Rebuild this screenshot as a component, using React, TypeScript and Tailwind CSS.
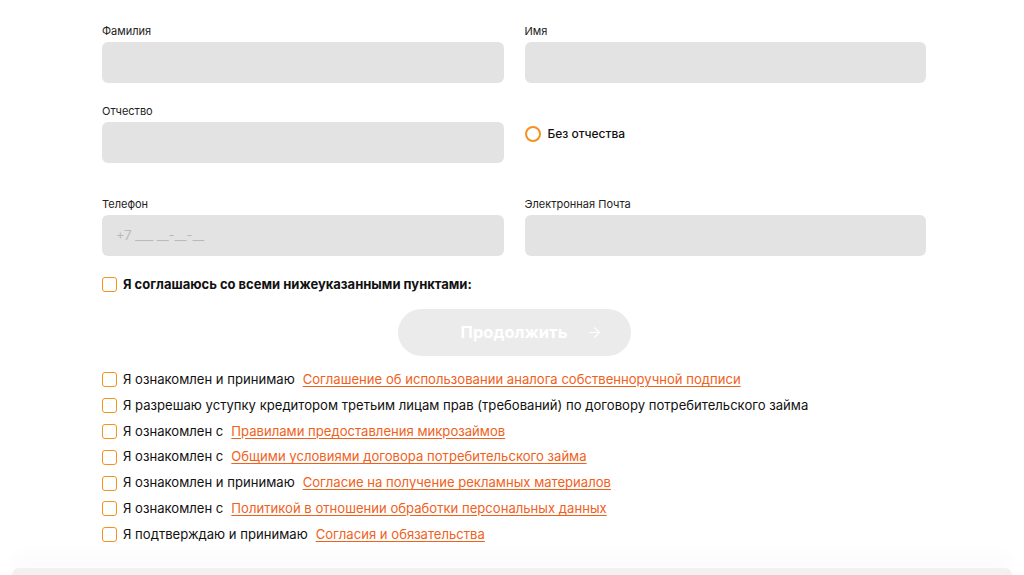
import { ArrowRight } from 'lucide-react';

const font = { fontFamily: 'Inter, Roboto, "Noto Sans", sans-serif' };

const Field = ({ label, placeholder }: { label: string; placeholder?: string }) => (
	<div className="flex flex-col">
		<label className="text-[11px] leading-[14px] text-[#222] mb-[4px]">{label}</label>
		<div className="h-[41px] rounded-[6px] bg-[#e3e3e3] flex items-center pl-[14px]">
			{placeholder && <span className="text-[13px] text-[#b9b9b9]">{placeholder}</span>}
		</div>
	</div>
);

const Box = () => (
	<span className="w-[15px] h-[15px] shrink-0 rounded-[3px] border-[1.5px] border-[#f5921e] bg-white" />
);

const agreements: { text: string; link?: string }[] = [
	{ text: 'Я ознакомлен и принимаю', link: 'Соглашение об использовании аналога собственноручной подписи' },
	{ text: 'Я разрешаю уступку кредитором третьим лицам прав (требований) по договору потребительского займа' },
	{ text: 'Я ознакомлен с', link: 'Правилами предоставления микрозаймов' },
	{ text: 'Я ознакомлен с', link: 'Общими условиями договора потребительского займа' },
	{ text: 'Я ознакомлен и принимаю', link: 'Согласие на получение рекламных материалов' },
	{ text: 'Я ознакомлен с', link: 'Политикой в отношении обработки персональных данных' },
	{ text: 'Я подтверждаю и принимаю', link: 'Согласия и обязательства' },
];

export default function App() {
	return (
		<div className="w-[1024px] h-[575px] overflow-hidden bg-white flex flex-col" style={font}>
			<div className="ml-[102px] w-[824px] pt-[24px] flex flex-col">
				<div className="grid grid-cols-2 gap-x-[21px]">
					<Field label="Фамилия" />
					<Field label="Имя" />
				</div>
				<div className="grid grid-cols-2 gap-x-[21px] mt-[21px]">
					<Field label="Отчество" />
					<div className="flex items-center gap-[7px] pt-[21px] self-start">
						<span className="w-[16px] h-[16px] rounded-full border-2 border-[#f5921e]" />
						<span className="text-[12px] font-medium text-[#111]">Без отчества</span>
					</div>
				</div>
				<div className="grid grid-cols-2 gap-x-[21px] mt-[34px]">
					<Field label="Телефон" placeholder="+7 ___ __-__-__" />
					<Field label="Электронная Почта" />
				</div>
				<div className="flex items-center gap-[6px] mt-[21px] h-[15px]">
					<Box />
					<span className="text-[13px] font-bold text-[#111]">Я соглашаюсь со всеми нижеуказанными пунктами:</span>
				</div>
				<button className="relative self-center mt-[17px] w-[233px] h-[47px] rounded-full bg-[#ebebeb] flex items-center justify-center text-white">
					<span className="text-[16.5px] font-bold">Продолжить</span>
					<ArrowRight className="absolute left-[188px] top-[15px] w-[17px] h-[17px]" strokeWidth={1.5} />
				</button>
				<div className="mt-[11px] flex flex-col">
					{agreements.map((a, i) => (
						<div key={i} className="h-[25.8px] flex items-center gap-[6px]">
							<Box />
							<span className="text-[13.1px] text-[#111]">{a.text}</span>
							{a.link && (
								<a href="#" className="ml-[2px] text-[13.1px] text-[#f0611c] underline underline-offset-2">
									{a.link}
								</a>
							)}
						</div>
					))}
				</div>
			</div>
			<div className="mt-[20px] mx-[12px] h-[40px] rounded-t-[28px] bg-[#f1f1f1] shadow-[0_-8px_20px_rgba(0,0,0,0.06)]" />
		</div>
	);
}
